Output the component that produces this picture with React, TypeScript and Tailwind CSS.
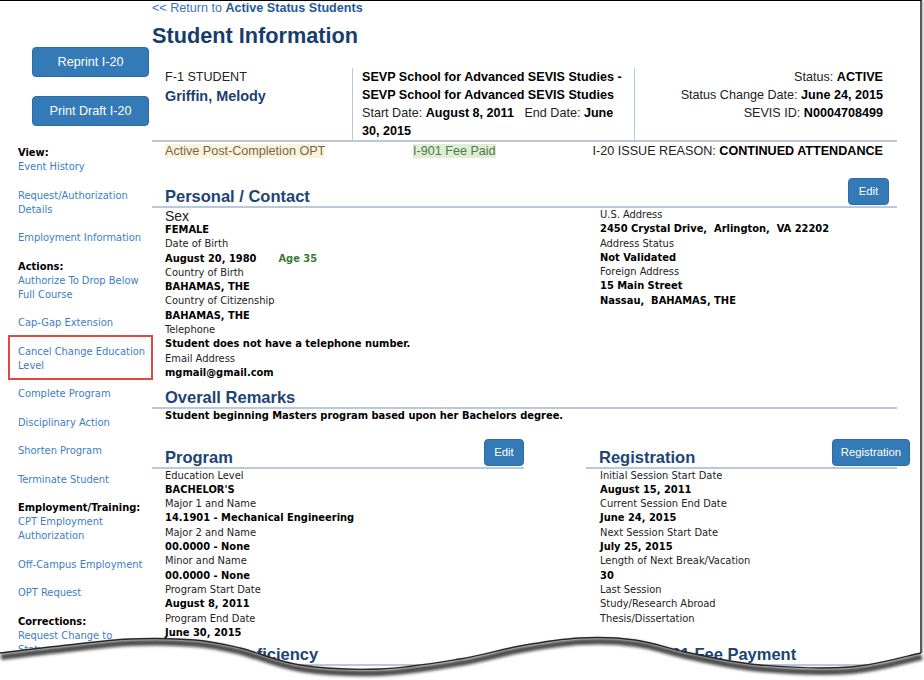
import React from 'react';

const body = "font-['DejaVu_Sans_Condensed','DejaVu_Sans',Verdana,sans-serif] text-[11px] leading-[14.3px]";
const arial = "font-['Liberation_Sans',Arial,sans-serif]";

type Group = { head: string; links: string[][] };

const sideNav: Group[] = [
  { head: 'View:', links: [['Event History'], ['Request/Authorization', 'Details'], ['Employment Information']] },
  {
    head: 'Actions:',
    links: [
      ['Authorize To Drop Below', 'Full Course'],
      ['Cap-Gap Extension'],
      ['Cancel Change Education', 'Level'],
      ['Complete Program'],
      ['Disciplinary Action'],
      ['Shorten Program'],
      ['Terminate Student'],
    ],
  },
  { head: 'Employment/Training:', links: [['CPT Employment', 'Authorization'], ['Off-Campus Employment'], ['OPT Request']] },
  { head: 'Corrections:', links: [['Request Change to', 'Status']] },
];

function BlueButton({ children, className = '' }: { children: React.ReactNode; className?: string }) {
  return (
    <button
      className={`${arial} bg-[#337ab7] border border-[#2e6da4] rounded-[4px] text-white flex items-center justify-center ${className}`}
    >
      {children}
    </button>
  );
}

function Sidebar() {
  return (
    <div className="w-[152px] shrink-0">
      <div className="pl-[32px] flex flex-col gap-[19px] mt-[46px]">
        <BlueButton className="w-[117px] h-[30px] text-[12.6px]">Reprint I-20</BlueButton>
        <BlueButton className="w-[117px] h-[30px] text-[12.6px]">Print Draft I-20</BlueButton>
      </div>
      <div className="font-['DejaVu_Sans_Condensed','DejaVu_Sans',Verdana,sans-serif] text-[11px] leading-[14.2px] pl-[18px] mt-[20px]">
        {sideNav.map((g) => (
          <div key={g.head}>
            <div className="font-bold text-black">{g.head}</div>
            {g.links.map((lines) => (
              <div key={lines[0]} className="relative mb-[14.2px] text-[#3d7ebf]">
                {lines.map((l) => (
                  <div key={l}>{l}</div>
                ))}
                {lines[0] === 'Cancel Change Education' && (
                  <div className="absolute -left-[10px] -top-[10px] w-[145px] h-[45px] border-2 border-[#e2483d]" />
                )}
              </div>
            ))}
          </div>
        ))}
      </div>
    </div>
  );
}

function SectionHead({ title, button, className = '' }: { title: string; button?: React.ReactNode; className?: string }) {
  return (
    <div className={`flex items-end justify-between border-b-2 border-[#b8c9dd] ${className}`}>
      <h2 className={`${arial} text-[16.5px] leading-[20px] font-bold text-[#1c4474] pl-[13px] whitespace-nowrap`}>
        {title}
      </h2>
      {button}
    </div>
  );
}

function Field({ label, value, extra }: { label: string; value?: string; extra?: React.ReactNode }) {
  return (
    <>
      <div className="text-[#222]">{label}</div>
      {value && (
        <div className="font-bold text-black whitespace-pre">
          {value}
          {extra}
        </div>
      )}
    </>
  );
}

// catmull-rom through the torn-edge points, turned into cubic beziers
function smooth(pts: [number, number][]) {
  let d = `M${pts[0][0]},${pts[0][1]}`;
  for (let i = 0; i < pts.length - 1; i++) {
    const p0 = pts[Math.max(0, i - 1)];
    const p1 = pts[i];
    const p2 = pts[i + 1];
    const p3 = pts[Math.min(pts.length - 1, i + 2)];
    const c1x = p1[0] + (p2[0] - p0[0]) / 6;
    const c1y = p1[1] + (p2[1] - p0[1]) / 6;
    const c2x = p2[0] - (p3[0] - p1[0]) / 6;
    const c2y = p2[1] - (p3[1] - p1[1]) / 6;
    d += ` C${c1x.toFixed(1)},${c1y.toFixed(1)} ${c2x.toFixed(1)},${c2y.toFixed(1)} ${p2[0]},${p2[1]}`;
  }
  return d;
}

// y values are relative to top-[615px]
const tornPoints: [number, number][] = [
  [0, 38],
  [60, 31],
  [130, 24],
  [195, 25],
  [240, 33],
  [300, 50],
  [380, 54],
  [460, 44],
  [520, 31],
  [580, 23],
  [635, 25],
  [690, 38],
  [760, 50],
  [850, 52],
  [921, 38],
];

function TornEdge() {
  const edge = smooth(tornPoints);
  return (
    <svg className="absolute left-0 top-[615px]" width="924" height="65" viewBox="0 0 924 65">
      <defs>
        <filter id="tornShadow" x="-5%" y="-50%" width="110%" height="200%">
          <feGaussianBlur stdDeviation="1.5" />
        </filter>
      </defs>
      <path d={`${edge} L924,38 L924,65 L0,65 Z`} fill="#fff" />
      <path
        d={edge}
        fill="none"
        stroke="#000"
        strokeOpacity="0.7"
        strokeWidth="6"
        transform="translate(1,4)"
        filter="url(#tornShadow)"
      />
      <path d={edge} fill="none" stroke="#262626" strokeWidth="1.4" />
    </svg>
  );
}

export default function App() {
  return (
    <div className="relative w-[924px] h-[680px] overflow-hidden bg-white">
      <div className="w-[922px] h-[680px] border-t border-t-black border-r-2 border-r-[#5a5a5a] shadow-[1px_0_2px_rgba(0,0,0,0.35)] flex">
        <Sidebar />

        <div className="w-[745px] shrink-0">
          <div className={`${arial} text-[12.6px] leading-[15px] text-[#3b74b8]`}>
            &lt;&lt; Return to <span className="font-bold text-[#25599c]">Active Status Students</span>
          </div>
          <h1 className={`${arial} text-[21.7px] leading-[26px] font-bold text-[#163d6c] mt-[7px]`}>Student Information</h1>

          {/* student header panel */}
          <div className={`${arial} text-[12.6px] leading-[18px] text-[#222] mt-[19px] flex border-b-2 border-[#b8c9dd]`}>
            <div className="w-[200px] pl-[13px]">
              <div>F-1 STUDENT</div>
              <div className="text-[14.4px] leading-[20px] font-bold text-[#1d3f6e]">Griffin, Melody</div>
            </div>
            <div className="w-[282px] border-l border-[#b8c9dd] pl-[9px]">
              <div className="font-bold text-black">SEVP School for Advanced SEVIS Studies -</div>
              <div className="font-bold text-black">SEVP School for Advanced SEVIS Studies</div>
              <div className="whitespace-pre">
                Start Date: <b className="text-black">August 8, 2011</b>   End Date: <b className="text-black">June</b>
              </div>
              <div className="font-bold text-black">30, 2015</div>
            </div>
            <div className="flex-1 border-l border-[#b8c9dd] pr-[14px] text-right">
              <div>
                Status: <b className="text-black">ACTIVE</b>
              </div>
              <div>
                Status Change Date: <b className="text-black">June 24, 2015</b>
              </div>
              <div>
                SEVIS ID: <b className="text-black">N0004708499</b>
              </div>
            </div>
          </div>
          <div className={`${arial} text-[12.6px] leading-[18px] flex pl-[13px] pr-[14px]`}>
            <div className="w-[248px]">
              <span className="bg-[#fcf3dd] text-[#70694f]">Active Post-Completion OPT</span>
            </div>
            <div>
              <span className="bg-[#dcefd3] text-[#5b7350]">I-901 Fee Paid</span>
            </div>
            <div className="flex-1 text-right text-[#222]">
              I-20 ISSUE REASON: <b className="text-black">CONTINUED ATTENDANCE</b>
            </div>
          </div>

          {/* personal / contact */}
          <SectionHead
            className="mt-[18px]"
            title="Personal / Contact"
            button={<BlueButton className="w-[41px] h-[27px] text-[11.3px] mr-[8px] mb-[1px]">Edit</BlueButton>}
          />
          <div className={`${body} grid grid-cols-[434px_311px]`}>
            <div className="pl-[13px]">
              <div className={`${arial} text-[14px] leading-[14px] pt-[1px] text-[#222]`}>Sex</div>
              <div className="font-bold text-black">FEMALE</div>
              <Field
                label="Date of Birth"
                value="August 20, 1980"
                extra={<span className="text-[#3c7a34] ml-[22px]">Age 35</span>}
              />
              <Field label="Country of Birth" value="BAHAMAS, THE" />
              <Field label="Country of Citizenship" value="BAHAMAS, THE" />
              <Field label="Telephone" value="Student does not have a telephone number." />
              <Field label="Email Address" value="mgmail@gmail.com" />
            </div>
            <div className="pl-[14px]">
              <Field label="U.S. Address" value="2450 Crystal Drive,  Arlington,  VA 22202" />
              <Field label="Address Status" value="Not Validated" />
              <Field label="Foreign Address" value="15 Main Street" />
              <div className="font-bold text-black whitespace-pre">Nassau,  BAHAMAS, THE</div>
            </div>
          </div>

          {/* remarks */}
          <SectionHead className="mt-[7px]" title="Overall Remarks" />
          <div className={`${body} pl-[13px] font-bold text-black`}>
            Student beginning Masters program based upon her Bachelors degree.
          </div>

          {/* program / registration */}
          <div className={`${body} grid grid-cols-[372px_62px_311px] mt-[15px]`}>
            <div>
              <SectionHead
                title="Program"
                button={<BlueButton className="w-[40px] h-[27px] text-[11.3px] mb-[1px]">Edit</BlueButton>}
              />
              <div className="pl-[13px]">
                <Field label="Education Level" value="BACHELOR'S" />
                <Field label="Major 1 and Name" value="14.1901 - Mechanical Engineering" />
                <Field label="Major 2 and Name" value="00.0000 - None" />
                <Field label="Minor and Name" value="00.0000 - None" />
                <Field label="Program Start Date" value="August 8, 2011" />
                <Field label="Program End Date" value="June 30, 2015" />
              </div>
            </div>
            <div />
            <div>
              <SectionHead
                title="Registration"
                button={
                  <BlueButton className="w-[78px] h-[27px] text-[11.3px] -mr-[13px] mb-[1px]">Registration</BlueButton>
                }
              />
              <div className="pl-[14px]">
                <Field label="Initial Session Start Date" value="August 15, 2011" />
                <Field label="Current Session End Date" value="June 24, 2015" />
                <Field label="Next Session Start Date" value="July 25, 2015" />
                <Field label="Length of Next Break/Vacation" value="30" />
                <Field label="Last Session" />
                <Field label="Study/Research Abroad" />
                <Field label="Thesis/Dissertation" />
              </div>
            </div>

            <SectionHead className="mt-[4px]" title="English Proficiency" />
            <div />
            <SectionHead className="mt-[4px]" title="SEVIS I-901 Fee Payment" />
          </div>
        </div>
      </div>
      <TornEdge />
    </div>
  );
}
